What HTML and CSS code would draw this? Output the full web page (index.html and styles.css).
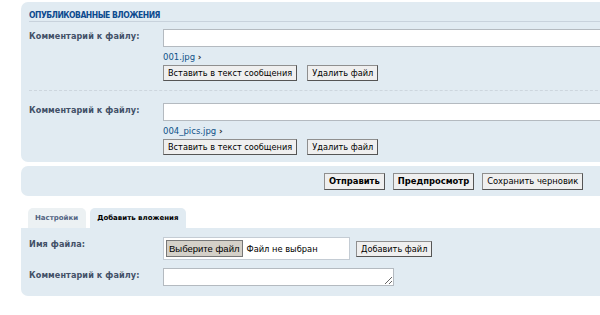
FILE: index.html
```html
<!DOCTYPE html>
<html lang="ru">
  <head>
    <meta charset="UTF-8" />
    <title>Вложения</title>
    <link rel="stylesheet" href="styles.css">
  </head>
  <body>
    <div class="page">
      <!-- Posted attachments -->
      <div class="panel attach-panel">
        <h3 class="panel-title">ОПУБЛИКОВАННЫЕ ВЛОЖЕНИЯ</h3>

        <div class="attach-row">
          <div class="row">
            <label class="label">Комментарий к файлу:</label>
            <div class="field">
              <input type="text" class="inputbox wide">
              <a class="file-link" href="#">001.jpg <span class="arrow">›</span></a>
              <div class="btn-row">
                <button class="button">Вставить в текст сообщения</button>
                <button class="button">Удалить файл</button>
              </div>
            </div>
          </div>
        </div>

        <div class="attach-row">
          <div class="row">
            <label class="label">Комментарий к файлу:</label>
            <div class="field">
              <input type="text" class="inputbox wide">
              <a class="file-link" href="#">004_pics.jpg <span class="arrow">›</span></a>
              <div class="btn-row">
                <button class="button">Вставить в текст сообщения</button>
                <button class="button">Удалить файл</button>
              </div>
            </div>
          </div>
        </div>
      </div>

      <!-- Submit buttons -->
      <div class="panel submit-panel">
        <button class="button bold">Отправить</button>
        <button class="button bold">Предпросмотр</button>
        <button class="button">Сохранить черновик</button>
      </div>

      <!-- Tabs -->
      <ul class="tabs">
        <li class="tab">Настройки</li>
        <li class="tab active">Добавить вложения</li>
      </ul>
      <div class="panel tab-panel">
        <div class="row upload-row">
          <label class="label">Имя файла:</label>
          <div class="field inline">
            <div class="file-input">
              <span class="file-btn">Выберите файл</span>
              <span class="file-name">Файл не выбран</span>
            </div>
            <button class="button">Добавить файл</button>
          </div>
        </div>
        <div class="row">
          <label class="label">Комментарий к файлу:</label>
          <div class="field">
            <textarea class="inputbox comment"></textarea>
          </div>
        </div>
      </div>
    </div>
  </body>
</html>
```

FILE: styles.css
```css
/* Global */
body {
  margin: 0;
  font-family: "DejaVu Sans", Verdana, sans-serif;
  background-color: #ffffff;
  color: #536482;
  overflow: hidden;
}

.page {
  margin: 2px 0 0 21px;
  width: 640px;
}

/* Panels */
.panel {
  background-color: #e1ebf2;
  border-radius: 7px;
}

.attach-panel {
  padding: 8px 8px 8px 8px;
  height: 144px;
}

.panel-title {
  margin: 0;
  font-family: "DejaVu Sans Condensed", "DejaVu Sans", sans-serif;
  font-size: 8.5px;
  font-weight: bold;
  color: #0d4a8f;
  letter-spacing: -0.5px;
  line-height: 10px;
  padding-bottom: 1px;
  border-bottom: 1px solid #c8d2dc;
}

.attach-row {
  padding: 7px 0 9px 0;
}

.attach-row + .attach-row {
  border-top: 1px dashed #cdd6de;
  padding-top: 12px;
  padding-bottom: 0;
}

.row {
  display: flex;
  align-items: flex-start;
}

.label {
  width: 134px;
  font-family: "DejaVu Sans Condensed", "DejaVu Sans", sans-serif;
  font-size: 9px;
  font-weight: bold;
  color: #425067;
  letter-spacing: 0.1px;
  padding-top: 2px;
}

.field {
  display: flex;
  flex-direction: column;
  align-items: flex-start;
}

.field.inline {
  flex-direction: row;
  align-items: center;
  gap: 6px;
}

.inputbox {
  border: 1px solid #b4bac0;
  background: #ffffff;
  box-sizing: border-box;
  margin: 0;
}

.inputbox.wide {
  width: 460px;
  height: 18px;
}

.file-link {
  font-size: 8.5px;
  color: #105289;
  text-decoration: none;
  margin: 4px 0 2px 0;
  line-height: 12px;
}

.arrow {
  font-size: 9px;
  font-weight: bold;
  color: #333;
}

.btn-row {
  display: flex;
  gap: 10px;
}

.button {
  font-family: "DejaVu Sans", Verdana, sans-serif;
  font-size: 8.2px;
  color: #000;
  background-color: #efefef;
  border: 1px solid #666666;
  border-color: #8f8f8f #555 #555 #8f8f8f;
  padding: 1px 4px;
  height: 16px;
  line-height: 12px;
  margin: 0;
  border-radius: 0;
}

.button.bold {
  font-weight: bold;
}

/* Submit */
.submit-panel {
  margin-top: 4px;
  height: 30px;
  display: flex;
  align-items: center;
  justify-content: flex-start;
  padding-left: 303px;
  gap: 8px;
  box-sizing: border-box;
}

.submit-panel .button {
  height: 17px;
  font-size: 8.4px;
}

/* Tabs */
.tabs {
  list-style: none;
  margin: 12px 0 0 7px;
  padding: 0;
  display: flex;
  gap: 4px;
}

.tab {
  font-size: 7px;
  font-weight: bold;
  color: #536482;
  background-color: #ecf1f3;
  border-radius: 5px 5px 0 0;
  padding: 6px 8px 5px 7px;
  line-height: 9px;
}

.tab.active {
  background-color: #e1ebf2;
  color: #000;
}

.tab-panel {
  border-top-left-radius: 0;
  padding: 9px 8px 10px 8px;
}

.upload-row {
  margin-bottom: 8px;
}

.file-input {
  display: flex;
  align-items: center;
  width: 187px;
  height: 23px;
  box-sizing: border-box;
  background: #fff;
  border: 1px solid #c4ccd4;
  padding-left: 2px;
}

.file-btn {
  font-family: "Liberation Sans", Arial, sans-serif;
  font-size: 9.5px;
  color: #000;
  background: #d4d0c8;
  border: 1px solid #777;
  padding: 2px 2px;
}

.file-name {
  font-family: "DejaVu Sans", Verdana, sans-serif;
  font-size: 8.3px;
  color: #000;
  margin-left: 4px;
}

.comment {
  width: 231px;
  height: 18px;
  resize: both;
}
```
